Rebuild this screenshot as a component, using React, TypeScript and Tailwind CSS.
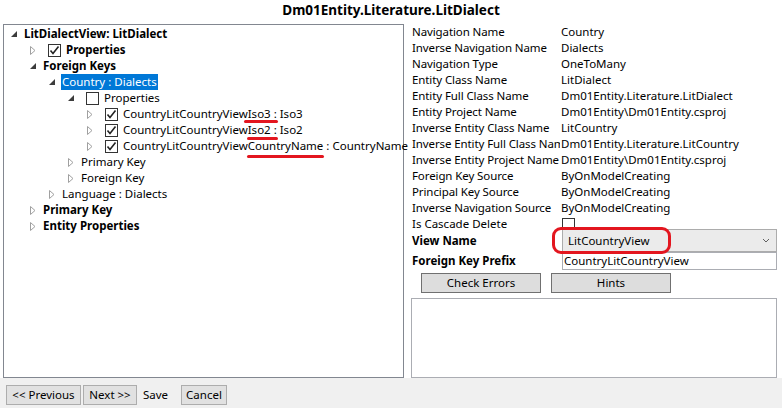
import React from "react";

const Expanded = () => (
    <svg width="6" height="6" viewBox="0 0 6 6">
        <path d="M6 0 L6 6 L0 6 Z" fill="#3c3c3c" />
    </svg>
);

const Collapsed = () => (
    <svg width="6" height="9" viewBox="0 0 6 9">
        <path d="M0.5 0.5 L5 4.5 L0.5 8.5 Z" fill="white" stroke="#a0a0a0" />
    </svg>
);

const Check = ({ checked }: { checked: boolean }) => (
    <span className="ml-[5px] mr-[5px] flex h-[13px] w-[13px] shrink-0 items-center justify-center border border-[#333] bg-white">
        {checked && (
            <svg width="11" height="11" viewBox="0 0 11 11">
                <path d="M1.5 5.5 L4 8.5 L9.5 1.5" fill="none" stroke="#222" strokeWidth="1.6" />
            </svg>
        )}
    </span>
);

const indents = ["pl-[4px]", "pl-[23px]", "pl-[42px]", "pl-[61px]", "pl-[80px]"];

type RowProps = {
    level: number;
    open?: boolean;
    check?: boolean | null;
    bold?: boolean;
    selected?: boolean;
    children: React.ReactNode;
};

const TreeRow = ({ level, open = false, check = null, bold = false, selected = false, children }: RowProps) => (
    <div className={`flex h-[16px] items-center ${indents[level]}`}>
        <span className="flex w-[16px] shrink-0 items-center pl-[3px]">
            {open ? <Expanded /> : <Collapsed />}
        </span>
        {check !== null && <Check checked={check} />}
        <span
            className={`whitespace-nowrap leading-[16px] ${bold ? "font-bold" : ""} ${
                selected ? "-ml-[1px] bg-[#0078d7] px-[1px] text-white" : ""
            }`}
        >
            {children}
        </span>
    </div>
);

// red hand-drawn underline under part of a label
const Mark = ({ children, top, left = 0, right = 0 }: { children: React.ReactNode; top: string; left?: number; right?: number }) => (
    <span className="relative">
        {children}
        <span
            className={`absolute h-[3px] rounded-full bg-[#e3161f] ${top}`}
            style={{ left: -left, right: -right }}
        />
    </span>
);

const props: [string, string][] = [
    ["Navigation Name", "Country"],
    ["Inverse Navigation Name", "Dialects"],
    ["Navigation Type", "OneToMany"],
    ["Entity Class Name", "LitDialect"],
    ["Entity Full Class Name", "Dm01Entity.Literature.LitDialect"],
    ["Entity Project Name", "Dm01Entity\\Dm01Entity.csproj"],
    ["Inverse Entity Class Name", "LitCountry"],
    ["Inverse Entity Full Class Name", "Dm01Entity.Literature.LitCountry"],
    ["Inverse Entity Project Name", "Dm01Entity\\Dm01Entity.csproj"],
    ["Foreign Key Source", "ByOnModelCreating"],
    ["Principal Key Source", "ByOnModelCreating"],
    ["Inverse Navigation Source", "ByOnModelCreating"],
];

const App = () => {
    return (
        <div className="flex h-[408px] w-[782px] flex-col overflow-hidden bg-white font-['Noto_Sans',sans-serif] text-[11.5px] text-black">
            <div className="flex h-[24px] items-center justify-center pb-[3px] text-[13.5px] font-bold">
                Dm01Entity.Literature.LitDialect
            </div>

            <div className="flex h-[354px]">
                <div className="ml-[3px] h-full w-[401px] border border-[#828790] pt-[1px]">
                    <TreeRow level={0} open bold>LitDialectView: LitDialect</TreeRow>
                    <TreeRow level={1} check bold>Properties</TreeRow>
                    <TreeRow level={1} open bold>Foreign Keys</TreeRow>
                    <TreeRow level={2} open selected>Country : Dialects</TreeRow>
                    <TreeRow level={3} open check={false}>Properties</TreeRow>
                    <TreeRow level={4} check>
                        CountryLitCountryView<Mark top="top-[14px]" left={4} right={1}>Iso3 :</Mark> Iso3
                    </TreeRow>
                    <TreeRow level={4} check>
                        CountryLitCountryView<Mark top="top-[15px]" left={1} right={1}>Iso2 :</Mark> Iso2
                    </TreeRow>
                    <TreeRow level={4} check>
                        CountryLitCountryView<Mark top="top-[17px]" left={1} right={1}>CountryName</Mark> : CountryName
                    </TreeRow>
                    <TreeRow level={3}>Primary Key</TreeRow>
                    <TreeRow level={3}>Foreign Key</TreeRow>
                    <TreeRow level={2}>Language : Dialects</TreeRow>
                    <TreeRow level={1} bold>Primary Key</TreeRow>
                    <TreeRow level={1} bold>Entity Properties</TreeRow>
                </div>

                <div className="ml-[7px] flex w-[366px] flex-col">
                    {props.map(([k, v]) => (
                        <div key={k} className="flex h-[16px] items-center">
                            <span className="w-[149px] shrink-0 overflow-hidden whitespace-nowrap pl-[1px] tracking-[-0.1px]">{k}</span>
                            <span className="pl-[1px] whitespace-nowrap">{v}</span>
                        </div>
                    ))}
                    <div className="flex h-[16px] items-center">
                        <span className="w-[151px] shrink-0 pl-[1px]">Is Cascade Delete</span>
                        <span className="h-[13px] w-[13px] border border-[#333] bg-white" />
                    </div>
                    <div className="mt-[-3px] flex h-[23px] items-center">
                        <span className="w-[151px] shrink-0 pl-[1px] font-bold">View Name</span>
                        <div className="relative flex h-[23px] flex-1 items-center justify-between border border-[#acacac] bg-[#ebebeb] pl-[5px] pr-[6px]">
                            <span>LitCountryView</span>
                            <svg width="8" height="5" viewBox="0 0 8 5">
                                <path d="M1 1 L4 4 L7 1" fill="none" stroke="#606060" />
                            </svg>
                            <span className="absolute left-[-11px] top-[-3px] h-[27px] w-[119px] rounded-[9px] border-[3px] border-[#e3161f]" />
                        </div>
                    </div>
                    <div className="flex h-[18px] items-center">
                        <span className="w-[151px] shrink-0 pl-[1px] font-bold">Foreign Key Prefix</span>
                        <div className="flex h-[18px] flex-1 items-center border border-[#abadb3] pl-[1px]">CountryLitCountryView</div>
                    </div>
                    <div className="mt-[3px] flex h-[20px] gap-[10px] pl-[10px]">
                        <button className="w-[120px] border border-[#707070] bg-[#dddddd]">Check Errors</button>
                        <button className="w-[120px] border border-[#707070] bg-[#dddddd]">Hints</button>
                    </div>
                    <div className="mt-[5px] flex-1 border border-[#abadb3]" />
                </div>
            </div>

            <div className="flex flex-1 items-center gap-[2px] bg-[#f0f0f0] pl-[6px] pt-[3px]">
                <button className="h-[20px] w-[75px] border border-[#adadad] bg-[#e1e1e1]">&lt;&lt; Previous</button>
                <button className="h-[20px] w-[54px] border border-[#adadad] bg-[#e1e1e1]">Next &gt;&gt;</button>
                <span className="ml-[4px] w-[36px]">Save</span>
                <button className="h-[20px] w-[46px] border border-[#adadad] bg-[#e1e1e1]">Cancel</button>
            </div>
        </div>
    );
};

export default App;
